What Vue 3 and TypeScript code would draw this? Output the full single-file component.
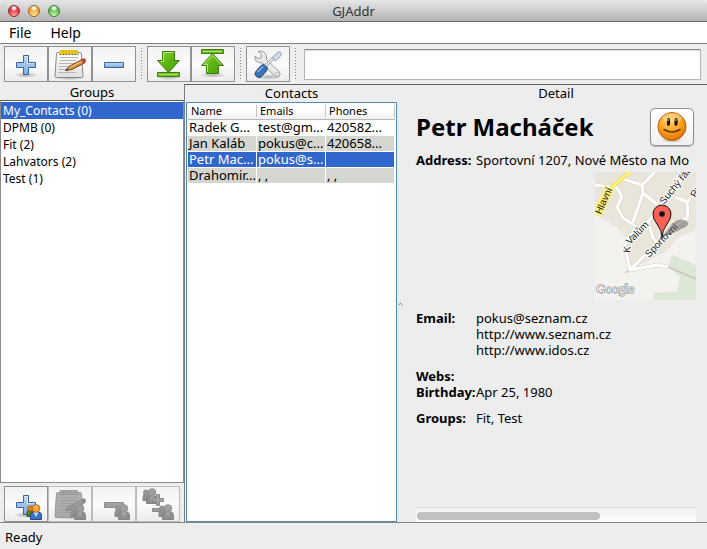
<script setup lang="ts">
import { ref } from 'vue'

interface Group { name: string; count: number }
interface Contact { name: string; emails: string; phones: string }
interface Action { icon: string; label: string; disabled?: boolean }

const groups: Group[] = [
  { name: 'My_Contacts', count: 0 },
  { name: 'DPMB', count: 0 },
  { name: 'Fit', count: 2 },
  { name: 'Lahvators', count: 2 },
  { name: 'Test', count: 1 },
]
const contacts: Contact[] = [
  { name: 'Radek G...', emails: 'test@gm...', phones: '420582...' },
  { name: 'Jan Kaláb', emails: 'pokus@c...', phones: '420658...' },
  { name: 'Petr Mac...', emails: 'pokus@s...', phones: '' },
  { name: 'Drahomir...', emails: ', ,', phones: ', ,' },
]
const toolbar: Action[][] = [
  [
    { icon: 'plus', label: 'Add contact' },
    { icon: 'note', label: 'Edit contact' },
    { icon: 'minus', label: 'Remove contact' },
  ],
  [
    { icon: 'down', label: 'Import' },
    { icon: 'up', label: 'Export' },
  ],
  [{ icon: 'tools', label: 'Preferences' }],
]
const groupActions: Action[] = [
  { icon: 'group-plus', label: 'Add group' },
  { icon: 'group-note', label: 'Rename group', disabled: true },
  { icon: 'group-minus', label: 'Remove group', disabled: true },
  { icon: 'group-members', label: 'Manage members', disabled: true },
]

const selectedGroup = ref(0)
const selectedContact = ref(2)
const query = ref('')
</script>

<template>
  <svg class="defs" aria-hidden="true">
    <defs>
      <linearGradient id="blue" x1="0" y1="0" x2="0" y2="1">
        <stop offset="0" stop-color="#c3daf2" /><stop offset="1" stop-color="#7fabdc" />
      </linearGradient>
      <linearGradient id="green" x1="0" y1="0" x2="1" y2="1">
        <stop offset="0" stop-color="#8fd83c" /><stop offset="0.5" stop-color="#5fb514" /><stop offset="1" stop-color="#479a08" />
      </linearGradient>
      <linearGradient id="paper" x1="0" y1="0" x2="0" y2="1">
        <stop offset="0" stop-color="#ffffff" /><stop offset="1" stop-color="#dfe0de" />
      </linearGradient>
      <radialGradient id="shade">
        <stop offset="0" stop-color="#000" stop-opacity="0.28" /><stop offset="1" stop-color="#000" stop-opacity="0" />
      </radialGradient>
      <radialGradient id="face" cx="0.42" cy="0.3" r="0.75">
        <stop offset="0" stop-color="#ffd36a" /><stop offset="0.55" stop-color="#fba21f" /><stop offset="1" stop-color="#d96a00" />
      </radialGradient>
    </defs>
    <symbol id="person" viewBox="0 0 16 16">
      <path d="M1 12.500V9q0-3 3-3.500h3v7z" fill="#5a7d10" stroke="#3f5a08" />
      <circle cx="4" cy="4.500" r="2.500" fill="#d98a2c" stroke="#a05a10" />
      <path d="M4.500 15.500V12q0-4 3-4h5q3 0 3 4v3.500z" fill="#3a76c4" stroke="#2a3f90" />
      <path d="M7.500 8l2.500 5 2.500-5z" fill="#cfe0f5" />
      <circle cx="10" cy="4.500" r="3.800" fill="#f7a43c" stroke="#c5650c" />
      <path d="M8 3.500q1.500-2 3.500-1" fill="none" stroke="#ffd08a" />
    </symbol>
    <symbol id="plus" viewBox="1 1 42 34">
      <ellipse cx="22" cy="29" rx="12" ry="3" fill="url(#shade)" />
      <path d="M19.500 9.500h5v7h7v5h-7v7h-5v-7h-7v-5h7z" fill="url(#blue)" stroke="#3465a4" />
      <path d="M20.500 10.500h3v7h7" fill="none" stroke="#e3effa" stroke-opacity="0.7" />
    </symbol>
    <symbol id="note" viewBox="1 1 42 34">
      <ellipse cx="22" cy="32" rx="15" ry="2" fill="url(#shade)" />
      <path d="M10 6.500h22q1.500 0 1.500 2L35 30q0 1.500-1.500 1.500h-25Q7 31.500 7 30L8.500 8q0-1.500 1.500-1.500z" fill="url(#paper)" stroke="#888a85" />
      <path d="M12 11.500h18M12 14.500h16M11 17.500h18M11 20.500h14M11 23.500h9M10 26.500h18" stroke="#b5b7b2" />
      <path d="M12 4h18v4H12z" fill="#c4a000" />
      <path d="M13.500 4v4M16.500 4v4M19.500 4v4M22.500 4v4M25.500 4v4M28.500 4v4" stroke="#f0d42c" stroke-width="2" />
      <path d="M11.500 8.500h19" stroke="#7e6500" stroke-dasharray="2 1" />
      <path d="M18 24.500l3-4L34 13.500l3 3-13 7z" fill="#dd9243" stroke="#74420d" />
      <path d="M33 14l3-1.500q2 .5 1.500 3L36 17z" fill="#d63c32" stroke="#8f2a20" stroke-width=".6" />
      <path d="M17 25l2-2.500 1 1.500z" fill="#222" />
      <path d="M22 21l12-6" stroke="#f6c78b" />
    </symbol>
    <symbol id="minus" viewBox="1 1 42 34">
      <path d="M12.500 16.500h19v5h-19z" fill="url(#blue)" stroke="#3465a4" />
    </symbol>
    <symbol id="down" viewBox="1 1 42 34">
      <ellipse cx="22" cy="31" rx="14" ry="3" fill="url(#shade)" />
      <path d="M15.500 5.500h12v9h5L21.500 26.500 10.500 14.500h5z" fill="url(#green)" stroke="#3c7d05" />
      <path d="M14 15.500h2.500v-9h10" fill="none" stroke="#b5e87a" />
      <path d="M10.500 26.500h22v4h-22z" fill="#73bd31" stroke="#3c7d05" />
      <path d="M12 28.500h19" stroke="#a5dd68" />
    </symbol>
    <symbol id="up" viewBox="1 1 42 34">
      <ellipse cx="22" cy="29" rx="13" ry="3" fill="url(#shade)" />
      <path d="M10.500 3.500h22v4h-22z" fill="#73bd31" stroke="#3c7d05" />
      <path d="M12 5.500h19" stroke="#a5dd68" />
      <path d="M15.500 27.500h12v-8h5L21.500 7.500 10.500 19.500h5z" fill="url(#green)" stroke="#3c7d05" />
      <path d="M16.500 26v-7.500H13L21.500 9l8.500 9.500" fill="none" stroke="#b5e87a" />
    </symbol>
    <symbol id="tools" viewBox="1 1 42 34">
      <ellipse cx="22" cy="31" rx="13" ry="3" fill="url(#shade)" />
      <path d="M12 5.500l3.500 3-.5 3.500-3 .5-3-2.500q-.5 5 3.500 6.500l4 .5L28.500 30q2 2 4.500.5 2.500-2.500 0-5L20.500 13.500q1-4.500-2-7T12 5.500z" fill="#e9eae8" stroke="#999b97" />
      <circle cx="30.700" cy="28" r="1.500" fill="#fff" stroke="#999b97" stroke-width=".7" />
      <path d="M19 20.500l9-9" stroke="#9a9c98" stroke-width="3" />
      <path d="M19 20.500l9-9" stroke="#f1f2f3" stroke-width="1.500" />
      <path d="M27.500 10.500l4-4q3-1 3.500 0t-.5 3.500l-4 4-2 .5-1.500-1.500z" fill="#cfdcea" stroke="#8fa2b8" />
      <path d="M18 18.500l3.500 3.500-1 3-5.500 6q-2 1.500-4.500-.5T9.500 26l5.500-6.500z" fill="#3b71b5" stroke="#204a87" />
      <path d="M11.500 26l5.500-5.500" stroke="#8db5e3" stroke-width="1.500" />
    </symbol>
    <symbol id="group-plus" viewBox="1 1 42 34">
      <use href="#plus" x="1" y="1" width="42" height="34" />
      <use href="#person" x="22" y="18" width="16" height="16" />
    </symbol>
    <symbol id="group-note" viewBox="1 1 42 34">
      <use href="#note" x="1" y="1" width="42" height="34" />
      <use href="#person" x="22" y="18" width="16" height="16" />
    </symbol>
    <symbol id="group-minus" viewBox="1 1 42 34">
      <use href="#minus" x="1" y="1" width="42" height="34" />
      <use href="#person" x="22" y="18" width="16" height="16" />
    </symbol>
    <symbol id="group-members" viewBox="1 1 42 34">
      <use href="#person" x="6" y="2" width="16" height="16" />
      <path d="M20.500 8.500h3v4h4v3h-4v4h-3v-4h-4v-3h4zM16.500 22.500h11v3h-11z" fill="url(#blue)" stroke="#3465a4" />
      <use href="#person" x="22" y="18" width="16" height="16" />
    </symbol>
  </svg>

  <div class="window">
    <header class="titlebar">
      <div class="lights">
        <button class="light red" aria-label="Close"></button>
        <button class="light amber" aria-label="Minimize"></button>
        <button class="light lime" aria-label="Zoom"></button>
      </div>
      <h1>GJAddr</h1>
    </header>

    <nav class="menubar">
      <button>File</button>
      <button>Help</button>
    </nav>

    <div class="toolbar">
      <div v-for="(set, i) in toolbar" :key="i" class="toolset">
        <button v-for="action in set" :key="action.icon" class="tool" :aria-label="action.label">
          <svg><use :href="'#' + action.icon" /></svg>
        </button>
      </div>
      <input v-model="query" class="search" type="text" aria-label="Search">
    </div>

    <main class="panes">
      <section class="groups">
        <h2>Groups</h2>
        <ul>
          <li v-for="(group, i) in groups" :key="group.name">
            <button :class="{ selected: i === selectedGroup }" @click="selectedGroup = i">{{ group.name }} ({{ group.count }})</button>
          </li>
        </ul>
        <div class="group-actions">
          <button v-for="action in groupActions" :key="action.icon" class="tool" :aria-label="action.label" :disabled="action.disabled">
            <svg><use :href="'#' + action.icon" /></svg>
          </button>
        </div>
      </section>

      <div class="split">
        <section class="contacts">
          <h2>Contacts</h2>
          <div class="table-frame">
            <table>
              <thead>
                <tr><th>Name</th><th>Emails</th><th>Phones</th></tr>
              </thead>
              <tbody>
                <tr v-for="(contact, i) in contacts" :key="contact.name" :class="{ selected: i === selectedContact }" @click="selectedContact = i">
                  <td>{{ contact.name }}</td><td>{{ contact.emails }}</td><td>{{ contact.phones }}</td>
                </tr>
              </tbody>
            </table>
          </div>
        </section>

        <div class="divider">
          <svg viewBox="0 0 5 4"><path d="M0.500 3.500L2.500 1l2 2.500" fill="none" stroke="#888" /></svg>
        </div>

        <section class="detail">
          <h2>Detail</h2>
          <div class="card">
            <div class="card-head">
              <h3>Petr Macháček</h3>
              <button class="avatar" aria-label="Contact photo">
                <svg viewBox="0 0 32 32">
                  <ellipse cx="16" cy="29" rx="12" ry="3" fill="url(#shade)" />
                  <circle cx="16" cy="15.500" r="14" fill="url(#face)" stroke="#b95c05" />
                  <ellipse cx="16" cy="7" rx="10" ry="5" fill="#fff" fill-opacity="0.250" />
                  <ellipse cx="12.500" cy="11" rx="1.700" ry="4" fill="#2a1400" />
                  <ellipse cx="20" cy="11" rx="1.700" ry="4" fill="#2a1400" />
                  <circle cx="12" cy="9" r=".8" fill="#fff" /><circle cx="19.500" cy="9" r=".8" fill="#fff" />
                  <path d="M8 18.500q8 5 16 0" fill="none" stroke="#6b3300" stroke-width="1.500" stroke-linecap="round" />
                </svg>
              </button>
            </div>
            <dl>
              <dt>Address:</dt>
              <dd>Sportovní 1207, Nové Město na Mo</dd>
              <dd class="map">
                <svg viewBox="0 0 101 128" role="img" aria-label="Map">
                  <path d="M0 0h101v128H0z" fill="#f3f2ee" />
                  <path d="M0 0h101v58L82 66 72 79 35 98 30 82V66L21 55 0 43z" fill="#e9e5db" />
                  <path d="M0 42l14 8 16 14v20l5 14-20-18L0 64z" fill="#f3f2ee" />
                  <path d="M77 83l24 10v35H58l1-7 23-1 3-16-12-9z" fill="#dce6d4" />
                  <path d="M62 93l11 2 28 12" fill="none" stroke="#c9c5be" stroke-width="1.500" />
                  <g fill="none" stroke="#d6d0c3" stroke-width="4">
                    <path d="M0 13l22 3 5 9-5 10 6 11 14 9M25 6l22 7L60 0M47 13l1 8L38 50M48 21l15 12M93 0L53 50 32 66l-2 9 5 23M80 25l12 5 1 15-18 13-40 40 27-5 11 2M92 30l9-10M53 50l5 16 5 7" />
                  </g>
                  <g fill="none" stroke="#fff" stroke-width="3" stroke-linejoin="round">
                    <path d="M0 13l22 3 5 9-5 10 6 11 14 9M25 6l22 7L60 0M47 13l1 8L38 50M48 21l15 12M93 0L53 50 32 66l-2 9 5 23M80 25l12 5 1 15-18 13-40 40 27-5 11 2M92 30l9-10M53 50l5 16 5 7" />
                  </g>
                  <path d="M35 0L17 15 0 43" fill="none" stroke="#e3cf55" stroke-width="4" />
                  <path d="M35 0L17 15 0 43" fill="none" stroke="#fff27a" stroke-width="3" />
                  <path d="M11 15l7 5L6 44l-6-1v-8z" fill="#fff27a" />
                  <g class="streets">
                    <text class="main-road" transform="translate(6 43) rotate(-66)">Hlavní</text>
                    <text transform="translate(69 33) rotate(-51)">Suchý řáde</text>
                    <text transform="translate(101 26) rotate(-63)">Ru</text>
                    <text transform="translate(35 81) rotate(-84)">K</text>
                    <text transform="translate(35 73) rotate(-46)">Valům</text>
                    <text transform="translate(54 86) rotate(-46)">Sportovní</text>
                  </g>
                  <path d="M67 65l10-13q8-7 14-3t-5 8q-8 5-19 8z" fill="#444" fill-opacity="0.450" />
                  <path d="M67 66q0-8-5-14-4-5-4-10a9 9 0 0 1 18 0q0 5-4 10-5 6-5 14z" fill="#fd6054" stroke="#111" />
                  <circle cx="67" cy="42" r="2.800" fill="#111" />
                  <text class="brand" x="1" y="121">Google</text>
                </svg>
              </dd>
              <dt>Email:</dt>
              <dd>pokus@seznam.cz</dd>
              <dd>http://www.seznam.cz</dd>
              <dd class="last">http://www.idos.cz</dd>
              <dt>Webs:</dt>
              <dd></dd>
              <dt>Birthday:</dt>
              <dd class="last">Apr 25, 1980</dd>
              <dt>Groups:</dt>
              <dd>Fit, Test</dd>
            </dl>
            <div class="scrollbar"><div class="thumb"></div></div>
          </div>
        </section>
      </div>
    </main>

    <footer>Ready</footer>
  </div>
</template>

<style>
body { margin: 0; }
</style>

<style scoped>
* { box-sizing: border-box; }
.defs { position: absolute; width: 0; height: 0; }
.window {
  display: flex;
  flex-direction: column;
  min-height: 100vh;
  background: #ededed;
  color: #000;
  font: 13px/16px "Noto Sans", "Open Sans", sans-serif;
}
button { margin: 0; padding: 0; border: 0; background: none; color: inherit; font: inherit; }
h1, h2, h3, ul, dl, dd { margin: 0; padding: 0; font-weight: 400; }

.titlebar {
  display: grid;
  grid-template-columns: 1fr auto 1fr;
  align-items: center;
  height: 22px;
  padding: 0 8px;
  border-bottom: 1px solid #686868;
  border-radius: 4px 4px 0 0;
  background: linear-gradient(#e6e6e6, #b4b4b4);
}
.titlebar h1 { color: #333; font-size: 13px; }
.lights { display: flex; gap: 8px; }
.light { width: 12px; height: 12px; border: 1px solid #555; border-radius: 50%; }
.red { border-color: #8c2c2c; background: radial-gradient(circle at 50% 20%, #fff 10%, transparent 35%), radial-gradient(circle at 50% 100%, #ffb4ac, #e8333a 60%); }
.amber { border-color: #9c6420; background: radial-gradient(circle at 50% 20%, #fff 10%, transparent 35%), radial-gradient(circle at 50% 100%, #fff09a, #f2a535 60%); }
.lime { border-color: #3f8038; background: radial-gradient(circle at 50% 20%, #fff 10%, transparent 35%), radial-gradient(circle at 50% 100%, #d5ffb0, #61bd55 60%); }

.menubar {
  display: flex;
  gap: 19px;
  height: 22px;
  padding: 0 9px;
  border-bottom: 1px solid #808080;
  background: #fff;
  font-size: 14px;
}

.toolbar { display: flex; align-items: center; height: 40px; padding: 0 6px 0 4px; }
.toolset { display: flex; }
.toolset::after {
  content: "";
  width: 1px;
  height: 32px;
  margin: 2px 5px;
  background: repeating-linear-gradient(#888 0 1px, transparent 1px 3px);
}
.tool {
  width: 44px;
  height: 36px;
  border: 1px solid #929292;
  background: linear-gradient(#f2f2f2, #fbfbfb 50%, #ececec);
}
.tool svg { display: block; width: 42px; height: 34px; }
.tool:disabled { border-color: #bcbcbc; }
.tool:disabled svg { filter: grayscale(1) contrast(0.2) brightness(1.15); }
.search {
  flex: 1;
  min-width: 0;
  height: 31px;
  margin-left: 3px;
  padding: 0 4px;
  border: 1px solid #b4b4b4;
  border-top-color: #8c8c8c;
  outline: 0;
  background: #fff;
  box-shadow: inset 0 1px 1px #ddd;
  font: inherit;
}

.panes { display: flex; flex: 1; }
h2 { font-size: 13px; line-height: 16px; text-align: center; }
.groups { display: flex; flex-direction: column; width: 184px; }
.groups ul {
  flex: 1;
  padding: 1px 0;
  border: 1px solid #8c8c8c;
  border-top-color: #606060;
  background: #fff;
  list-style: none;
}
.groups li button { display: block; width: 100%; padding: 0 2px; font-size: 12px; line-height: 17px; text-align: left; }
.groups .selected { background: #3166cc; color: #fff; }
.group-actions { display: flex; padding: 3px 4px 0; }

.split {
  display: flex;
  flex: 1;
  min-width: 0;
  border-top: 1px solid #606060;
  border-left: 1px solid #808080;
}
.contacts { display: flex; flex-direction: column; width: 212px; padding-left: 1px; }
.table-frame { flex: 1; margin-top: 1px; padding: 0 1px; border: 1px solid #4f8dc0; background: #fff; }
table { width: 100%; border-collapse: separate; border-spacing: 0; table-layout: fixed; }
th {
  height: 17px;
  padding: 0 3px;
  border-bottom: 1px solid #b8b8b8;
  background: linear-gradient(#c4c4c4, #c4c4c4) 100% 2px / 1px 12px no-repeat, linear-gradient(#fff 40%, #efefef);
  font-size: 11px;
  font-weight: 400;
  line-height: 16px;
  text-align: left;
}
td {
  height: 16px;
  padding: 0 0 0 1px;
  overflow: hidden;
  border-right: 1px solid #fff;
  border-bottom: 1px solid #fff;
  font-size: 13px;
  line-height: 15px;
  white-space: nowrap;
}
tbody tr:nth-child(even) { background: #d4d6cf; }
tbody tr.selected { background: #3166cc; color: #fff; }

.divider { display: flex; align-items: center; width: 8px; padding-left: 1px; }
.divider svg { width: 5px; height: 4px; }

.detail { display: flex; flex: 1; flex-direction: column; min-width: 0; }
.card { display: flex; flex: 1; flex-direction: column; padding: 7px 11px 0; overflow: hidden; }
.card-head { display: flex; align-items: center; justify-content: space-between; height: 38px; padding-right: 2px; }
.card h3 { font-size: 24px; font-weight: 700; line-height: 32px; white-space: nowrap; }
.avatar {
  display: grid;
  place-items: center;
  width: 44px;
  height: 38px;
  border: 1px solid #8f8f8f;
  border-radius: 5px;
  background: linear-gradient(#fff, #f1f1f1);
  box-shadow: 0 1px 1px #b5b5b5;
}
.avatar svg { width: 32px; height: 32px; }
dl { display: grid; grid-template-columns: 60px minmax(0, 1fr); padding-top: 6px; }
dt { grid-column: 1; font-weight: 700; white-space: nowrap; }
dd { grid-column: 2; min-height: 16px; white-space: nowrap; }
dd.last { margin-bottom: 10px; }
.map { display: flex; justify-content: flex-end; padding: 4px 0 10px; }
.map svg { width: 101px; height: 128px; overflow: hidden; }
.streets { fill: #222; stroke: #fff; stroke-width: 2px; paint-order: stroke; font: 10px "Liberation Sans", sans-serif; }
.main-road { stroke: #fff27a; }
.brand { fill: #f7f7f7; stroke: #777; stroke-width: 1px; paint-order: stroke; font: 13px "Liberation Serif", serif; }
.scrollbar { height: 15px; margin-top: auto; padding: 4px 1px; border-top: 1px solid #ddd; background: linear-gradient(#f0f0f0, #fcfcfc); }
.thumb { width: 66%; height: 8px; border-radius: 4px; background: #c1c1c1; }

footer { height: 27px; padding: 6px 5px 0; border-top: 1px solid #858585; }
</style>
